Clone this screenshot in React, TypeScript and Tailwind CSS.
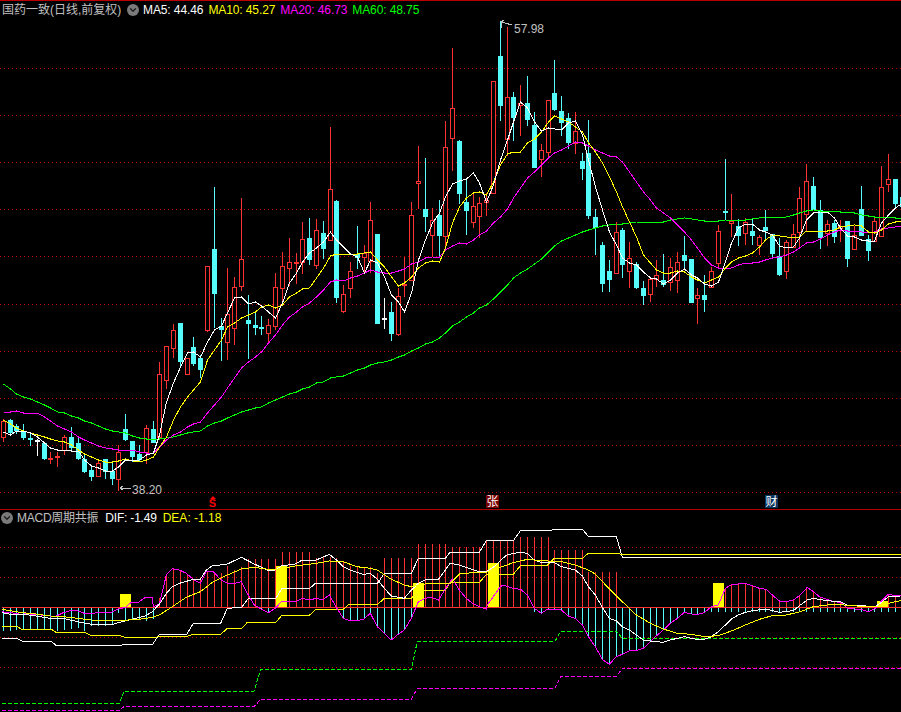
import { ChevronDown } from "lucide-react";

type Bar = [number, number, number, number, "r" | "c" | "w"];

// hi, body top, body bottom, lo, colour (pixels)
const BARS: Bar[] = [
  [419, 421, 437, 441, "r"], [419, 420, 432, 433, "c"], [424, 426, 430, 433, "c"], [424, 431, 437, 439, "c"],
  [433, 438, 439, 445, "c"], [439, 440, 441, 455, "w"], [442, 443, 458, 459, "c"], [452, 458, 459, 463, "r"],
  [452, 456, 457, 466, "r"], [435, 437, 450, 454, "r"], [427, 437, 447, 451, "c"], [438, 443, 458, 459, "c"],
  [455, 459, 471, 472, "c"], [465, 470, 476, 480, "c"], [460, 463, 476, 476, "r"], [459, 459, 471, 478, "c"],
  [463, 471, 478, 484, "c"], [445, 452, 479, 490, "r"], [414, 429, 439, 440, "c"], [441, 441, 456, 461, "c"],
  [445, 454, 459, 460, "c"], [425, 428, 452, 463, "r"], [421, 429, 442, 442, "c"], [362, 374, 437, 437, "r"],
  [346, 346, 380, 388, "r"], [324, 330, 348, 357, "r"], [323, 323, 361, 365, "c"], [358, 358, 374, 374, "r"],
  [337, 347, 363, 365, "c"], [355, 358, 369, 377, "c"], [266, 266, 330, 331, "r"], [187, 249, 293, 327, "c"],
  [318, 326, 329, 360, "c"], [268, 314, 342, 359, "r"], [277, 287, 328, 344, "r"], [198, 259, 286, 290, "r"],
  [295, 320, 323, 358, "c"], [313, 325, 327, 334, "c"], [316, 327, 328, 334, "c"], [319, 325, 333, 341, "r"],
  [273, 287, 326, 329, "r"], [252, 266, 288, 300, "r"], [238, 262, 268, 285, "r"], [253, 262, 263, 283, "r"],
  [222, 239, 262, 273, "r"], [218, 238, 259, 264, "c"], [219, 230, 265, 268, "r"], [221, 233, 248, 258, "c"],
  [127, 189, 240, 240, "r"], [200, 201, 297, 302, "c"], [285, 294, 311, 312, "r"], [262, 271, 288, 297, "r"],
  [226, 254, 257, 268, "c"], [245, 253, 257, 273, "r"], [202, 220, 261, 272, "r"], [234, 234, 323, 323, "c"],
  [298, 318, 319, 328, "w"], [302, 312, 333, 340, "c"], [288, 296, 334, 335, "r"], [257, 284, 285, 296, "r"],
  [202, 215, 280, 280, "r"], [146, 181, 183, 208, "r"], [158, 209, 216, 231, "c"], [208, 220, 235, 256, "r"],
  [200, 215, 235, 256, "c"], [121, 147, 236, 245, "r"], [48, 108, 138, 170, "r"], [140, 141, 193, 203, "c"],
  [180, 202, 210, 234, "c"], [193, 206, 222, 227, "r"], [197, 203, 216, 237, "r"], [193, 200, 202, 215, "r"],
  [81, 81, 193, 193, "r"], [21, 56, 105, 120, "c"], [27, 97, 139, 155, "r"], [92, 97, 117, 140, "c"],
  [85, 103, 105, 135, "r"], [76, 103, 119, 125, "c"], [112, 125, 167, 167, "c"], [144, 150, 159, 176, "r"],
  [100, 100, 152, 158, "r"], [60, 93, 109, 110, "c"], [96, 111, 122, 135, "c"], [113, 118, 142, 148, "c"],
  [112, 131, 143, 153, "r"], [153, 161, 168, 179, "c"], [120, 153, 215, 218, "c"], [209, 217, 227, 254, "c"],
  [242, 245, 283, 291, "c"], [260, 271, 279, 291, "c"], [222, 232, 273, 273, "r"], [228, 230, 264, 277, "c"],
  [242, 258, 271, 287, "r"], [262, 264, 287, 288, "c"], [281, 288, 295, 304, "c"], [278, 279, 294, 301, "r"],
  [260, 275, 279, 286, "r"], [254, 280, 284, 286, "c"], [258, 267, 282, 290, "r"], [252, 262, 280, 292, "r"],
  [236, 255, 260, 268, "c"], [259, 259, 302, 302, "c"], [288, 295, 298, 323, "r"], [275, 295, 299, 311, "c"],
  [267, 271, 287, 287, "r"], [225, 231, 263, 266, "r"], [159, 211, 212, 219, "c"], [194, 221, 223, 236, "r"],
  [219, 226, 235, 245, "c"], [218, 222, 233, 244, "r"], [219, 231, 235, 244, "c"], [235, 237, 245, 254, "r"],
  [210, 227, 230, 238, "c"], [234, 234, 253, 257, "c"], [238, 256, 274, 275, "c"], [240, 242, 271, 278, "r"],
  [224, 234, 247, 247, "r"], [187, 198, 232, 247, "r"], [164, 181, 214, 230, "r"], [177, 186, 209, 209, "c"],
  [200, 210, 237, 248, "c"], [220, 224, 233, 245, "r"], [220, 223, 236, 242, "c"], [220, 226, 228, 241, "r"],
  [221, 221, 258, 266, "c"], [226, 235, 249, 249, "r"], [186, 209, 235, 235, "c"], [235, 239, 250, 260, "c"],
  [217, 221, 241, 241, "r"], [166, 187, 236, 236, "r"], [154, 179, 184, 191, "r"], [179, 179, 203, 208, "c"],
  [197, 197, 206, 208, "c"],
];

const MA5 = [432,435,431,431,433,437,443,448,450,450,451,451,460,466,468,471,471,467,460,461,460,455,453,435,402,383,367,353,352,357,342,330,326,313,298,297,304,302,306,312,318,303,283,273,262,253,248,242,232,240,247,254,257,273,260,263,277,295,302,312,293,260,240,223,213,197,184,181,179,173,183,202,185,160,140,122,102,108,122,131,128,129,130,123,121,135,160,187,210,232,245,258,263,265,272,278,279,284,280,273,269,275,278,284,286,282,262,243,228,224,224,230,232,235,246,248,247,238,220,213,212,212,218,228,236,237,240,241,241,223,215,208,203];
const MA10 = [420,424,428,431,433,435,437,439,441,442,445,450,454,457,460,462,462,461,459,461,462,460,457,447,437,420,407,397,390,382,360,350,340,327,323,318,315,312,307,305,308,305,297,293,289,288,278,268,256,254,254,254,254,253,252,260,267,277,286,283,277,268,263,261,262,248,223,207,198,193,192,195,182,165,154,152,152,143,139,132,122,116,119,122,127,132,143,152,163,177,192,207,222,237,255,263,270,273,273,271,272,277,280,283,280,277,268,262,258,256,253,247,240,235,236,237,238,237,231,231,231,231,230,227,226,225,226,232,233,230,224,222,221];
const MA20 = [412,412,411,413,413,413,417,421,426,429,432,437,440,443,446,448,449,450,450,450,452,453,453,447,440,435,432,427,424,422,413,405,397,388,378,368,362,357,352,343,335,325,317,312,307,303,297,290,282,280,281,278,276,273,270,272,273,273,271,269,264,262,258,257,257,250,246,243,244,240,235,231,223,217,209,198,188,178,172,165,158,153,150,146,142,143,146,150,153,156,157,162,172,182,192,200,208,213,218,225,232,240,248,258,265,268,269,268,265,263,263,262,260,258,257,255,252,248,243,242,239,235,232,230,231,231,232,233,232,229,228,227,226];
const MA60 = [384,389,394,397,399,402,405,408,412,413,416,418,421,423,426,429,431,432,433,436,438,439,439,439,438,437,435,433,432,431,426,423,421,418,415,412,410,408,407,403,400,397,394,392,389,387,383,382,378,377,376,373,370,368,365,363,362,360,357,355,351,348,344,342,338,333,326,322,317,313,308,305,299,292,285,278,273,269,264,259,252,246,241,238,235,232,230,228,226,225,224,224,223,222,222,222,222,222,220,219,218,219,220,221,221,221,220,220,220,220,219,218,217,217,218,217,215,213,211,210,211,211,211,212,212,213,215,216,217,217,217,218,218];

// lower panel readings: x and y in 3x units, y measured from 490; right half is shifted by 1350
const low = (left: number[][], right: number[][] = []) =>
  [...left, ...right.map(([x, y]) => [x + 1350, y])].map(([x, y]) => `${x / 3},${490 + y / 3}`).join(" ");

const DIF = low(
  [[5,368],[28,372],[67,372],[108,378],[151,385],[190,385],[232,395],[274,403],[334,405],[355,398],[394,388],[436,378],[457,365],[480,340],[499,310],[517,290],[538,280],[580,268],[601,268],[619,240],[640,225],[661,225],[682,222],[703,212],[724,202],[763,222],[784,232],[805,242],[826,240],[844,228],[886,222],[907,210],[949,210],[988,193],[1009,210],[1030,230],[1051,240],[1090,253],[1111,250],[1132,268],[1153,295],[1174,318],[1213,325],[1234,300],[1255,280],[1276,270],[1315,268],[1336,240]],
  [[0,220],[28,225],[49,232],[88,245],[109,245],[130,232],[151,212],[170,195],[190,190],[212,187],[232,190],[253,210],[274,217],[313,218],[334,230],[376,240],[397,258],[415,290],[436,315],[457,352],[478,385],[499,392],[517,410],[538,420],[559,435],[580,450],[601,453],[640,457],[661,450],[682,445],[703,440],[724,445],[742,448],[763,448],[784,440],[805,425],[826,405],[847,385],[865,375],[886,367],[907,362],[949,357],[988,367],[1030,362],[1051,345],[1072,330],[1090,325],[1132,332],[1174,336],[1192,345],[1234,347],[1276,350],[1297,335],[1315,320],[1352,318]]
);
const DEA = low(
  [[5,358],[67,368],[108,372],[151,378],[190,380],[232,385],[274,390],[355,392],[415,388],[457,382],[478,375],[517,350],[559,322],[601,305],[640,275],[682,255],[724,237],[763,232],[805,238],[826,240],[886,228],[949,220],[988,213],[1030,215],[1070,230],[1111,235],[1132,240],[1174,268],[1213,285],[1234,290],[1276,282],[1315,280]],
  [[0,280],[28,252],[67,248],[109,247],[151,232],[190,218],[232,208],[274,212],[334,215],[376,225],[415,240],[436,252],[478,297],[517,335],[559,375],[601,400],[640,417],[682,430],[724,433],[763,440],[805,437],[847,422],[886,405],[928,388],[967,377],[1009,375],[1051,365],[1090,350],[1132,345],[1174,343],[1192,347],[1276,350],[1315,340],[1352,332]]
);
const MACD = low(
  [[5,365],[28,368],[49,370],[67,368],[88,372],[108,373],[130,376],[151,378],[169,378],[190,368],[211,362],[232,362],[253,370],[274,372],[292,367],[313,367],[334,367],[355,357],[376,352],[394,337],[415,337],[436,322],[457,322],[460,350],[478,343],[499,255],[517,236],[538,240],[559,250],[580,268],[601,280],[619,245],[640,245],[661,268],[682,280],[703,280],[724,275],[742,310],[763,345],[784,357],[805,368],[826,355],[844,335],[865,335],[886,335],[907,325],[928,330],[949,325],[967,330],[988,315],[1009,352],[1030,385],[1051,393],[1070,392],[1090,388],[1111,370],[1132,410],[1153,430],[1174,450],[1192,435],[1213,420],[1234,385],[1255,335],[1276,325],[1294,322],[1315,330]],
  [[7,265],[28,300],[49,325],[67,340],[88,350],[109,357],[112,345],[151,290],[160,285],[190,295],[212,298],[232,315],[253,355],[274,370],[292,358],[313,357],[334,360],[355,378],[376,385],[397,405],[415,440],[436,470],[457,508],[478,523],[499,500],[517,493],[538,482],[559,482],[580,475],[601,455],[622,435],[640,420],[661,400],[682,385],[703,367],[724,372],[742,373],[763,368],[784,350],[805,345],[826,295],[847,282],[865,282],[886,280],[907,287],[928,295],[949,298],[967,315],[988,333],[1009,335],[1030,330],[1051,315],[1072,292],[1090,305],[1111,322],[1132,328],[1153,335],[1174,338],[1192,355],[1213,357],[1234,358],[1255,365],[1276,355],[1297,330],[1315,313],[1336,317],[1352,318]]
);
const STEP_WHITE = low(
  [[5,445],[50,445],[65,453],[155,455],[168,466],[365,466],[370,463],[458,463],[478,433],[560,433],[580,400],[662,400],[682,355],[725,352],[745,325],[828,325],[845,296],[928,296],[945,281],[1132,281],[1153,250],[1234,250],[1255,205],[1336,205]],
  [[0,187],[88,187],[109,152],[190,152],[212,121],[303,121],[310,118],[397,118],[415,139],[499,139],[517,202],[1352,202]]
);
const STEP_YELLOW = low(
  [[5,409],[50,409],[65,418],[155,418],[168,427],[255,427],[272,436],[358,436],[372,441],[470,441],[478,439],[560,439],[580,433],[662,433],[682,415],[725,415],[742,397],[828,397],[845,376],[928,376],[948,358],[1030,358],[1045,344],[1132,344],[1153,325],[1234,325],[1255,301],[1336,301]],
  [[0,278],[88,278],[109,253],[190,253],[212,226],[292,226],[313,205],[397,205],[415,190],[499,190],[517,193],[1352,193]]
);
const DASH_GREEN = low(
  [[5,640],[358,640],[372,604],[762,604],[782,538],[1234,538],[1252,454]],
  [[0,454],[315,454],[332,424],[499,424],[517,445],[1352,445]]
);
const DASH_MAGENTA = low(
  [[5,661],[358,661],[372,650],[762,650],[782,628],[1234,628],[1252,595]],
  [[0,595],[315,595],[332,559],[499,559],[517,535],[1352,535]]
);

// histogram ends by bar index, same 3x units; 0 means no stick
const RED_TOPS = [0,0,0,0,0,0,0,0,0,0,0,0,0,0,0,0,0,0,0,0,0,0,0,325,258,238,240,255,268,268,245,245,250,228,240,232,208,208,208,208,208,186,186,186,186,186,205,202,202,205,215,228,232,232,232,250,205,205,205,205,205,162,162,162,162,162,172,172,172,172,172,150,150,150,150,150,140,140,140,140,140,180,180,180,180,180,245,245,245,245,245,0,0,0,0,0,0,0,0,0,0,0,0,0,0,0,295,282,282,280,287,295,298,315,333,335,330,315,292,305,322,328,335,338,0,0,0,0,0,330,313,317,318];
const CYAN_ENDS = [423,423,420,420,420,420,420,420,423,420,418,415,423,408,408,408,405,370,390,388,390,392,388,0,0,0,0,0,0,0,0,0,0,0,0,0,0,0,357,368,355,0,0,0,0,0,0,0,0,0,385,393,392,388,370,410,430,450,435,420,385,0,0,0,0,0,0,0,0,0,0,0,0,0,0,0,0,0,365,370,358,357,360,378,385,405,440,470,508,523,500,493,482,482,475,455,435,420,400,385,367,372,373,368,365,365,365,365,365,365,365,365,365,365,365,365,365,365,365,365,365,365,365,365,365,365,365,365,365,365,365,365,365];

const YELLOW_BLOCKS = [
  [120, 594], [276, 566], [413, 583], [488, 563], [713, 583], [877, 601],
];

const GRID_TOP = [68, 115, 162, 209, 256, 304, 351, 398, 445, 492];
const GRID_LOW = [547, 577, 637, 667];

const barX = (i: number) => Math.round(2.7 + 6.81 * i);
const line = (ys: number[]) => ys.map((y, i) => `${barX(i) + 0.5},${y}`).join(" ");

function Candle({ bar, x }: { bar: Bar; x: number }) {
  const [hi, top, bot, lo, kind] = bar;
  if (kind === "r") {
    return (
      <g>
        <rect x={x} y={hi} width={1} height={lo - hi + 1} fill="#ff3232" />
        <rect x={x - 2 + 0.5} y={top + 0.5} width={4} height={Math.max(bot - top, 1)} fill="#000" stroke="#ff3232" />
      </g>
    );
  }
  const color = kind === "c" ? "#54fcfc" : "#ffffff";
  return (
    <g>
      <rect x={x} y={hi} width={1} height={lo - hi + 1} fill={color} />
      <rect x={x - 2} y={top} width={5} height={Math.max(bot - top + 1, 2)} fill={color} />
    </g>
  );
}

function MenuDot() {
  return (
    <span className="flex h-3 w-3 shrink-0 items-center justify-center rounded-full bg-[#7a7a7a]">
      <ChevronDown size={10} strokeWidth={3} color="#1c1c1c" />
    </span>
  );
}

export default function App() {
  return (
    <div className="flex h-[712px] w-[901px] flex-col overflow-hidden bg-black font-['Liberation_Sans','Noto_Sans_CJK_SC',sans-serif] text-xs leading-none text-[#c0c0c0]">
      <div className="h-px shrink-0 bg-[#b80000]" />

      {/* price panel */}
      <div className="relative h-[508px] shrink-0">
        <svg className="block" width={901} height={508} viewBox="0 1 901 508">
          {GRID_TOP.map((y) => (
            <line key={y} x1={0} x2={901} y1={y + 0.5} y2={y + 0.5} stroke="#c00000" strokeDasharray="1 3" />
          ))}
          <g shapeRendering="crispEdges">
            {BARS.map((b, i) => (
              <Candle key={i} bar={b} x={barX(i)} />
            ))}
          </g>
          <g fill="none" strokeWidth={1} shapeRendering="crispEdges">
            <polyline points={line(MA60)} stroke="#00ff00" />
            <polyline points={line(MA20)} stroke="#ff00ff" />
            <polyline points={line(MA10)} stroke="#ffff00" />
            <polyline points={line(MA5)} stroke="#ffffff" />
          </g>
          <g fill="none" stroke="#c0c0c0" shapeRendering="crispEdges">
            <polyline points="512,25 505,23 501,22 504,20" />
            <polyline points="501,22 501,28" />
            <polyline points="131,488 120,488" />
            <polyline points="123,486 120,488 123,490" />
          </g>
        </svg>

        <div className="absolute left-[2px] top-[3px] flex items-center">
          <span className="w-[122px] whitespace-nowrap">国药一致(日线,前复权)</span>
          <span className="ml-[3px]"><MenuDot /></span>
          <span className="ml-[4px] flex gap-[5px] whitespace-nowrap tracking-[-0.1px]">
            <span className="text-white">MA5: 44.46</span>
            <span className="text-[#ffff00]">MA10: 45.27</span>
            <span className="text-[#ff00ff]">MA20: 46.73</span>
            <span className="text-[#00ff00]">MA60: 48.75</span>
          </span>
        </div>

        <span className="absolute left-[514px] top-[22px]">57.98</span>
        <span className="absolute left-[132px] top-[483px]">38.20</span>

        <div className="absolute left-[209px] top-[495px] flex w-[7px] flex-col items-center text-[#ff0000]">
          <span className="h-0 w-0 border-x-[3px] border-b-[3px] border-x-transparent border-b-[#ff0000]" />
          <span className="text-[11px] font-bold leading-[9px]">S</span>
        </div>
        <span className="absolute left-[486px] top-[494px] flex h-[13px] w-[13px] items-center justify-center bg-[#7a0000] text-white">张</span>
        <span className="absolute left-[765px] top-[494px] flex h-[13px] w-[13px] items-center justify-center bg-[#0a3560] text-white">财</span>
      </div>

      <div className="h-px shrink-0 bg-[#b00000]" />

      {/* indicator panel */}
      <div className="relative flex-1">
        <svg className="block" width={901} height={202} viewBox="0 510 901 202">
          {GRID_LOW.map((y) => (
            <line key={y} x1={0} x2={901} y1={y + 0.5} y2={y + 0.5} stroke="#c00000" strokeDasharray="1 3" />
          ))}
          <g shapeRendering="crispEdges">
            {RED_TOPS.map((z, i) =>
              z ? <rect key={i} x={barX(i)} y={490 + z / 3} width={1} height={607 - (490 + z / 3)} fill="#ff3232" /> : null
            )}
            {CYAN_ENDS.map((z, i) =>
              z ? <rect key={i} x={barX(i)} y={608} width={1} height={490 + z / 3 - 608} fill="#54fcfc" /> : null
            )}
            <rect x={2} y={607} width={899} height={1} fill="#ff3232" />
            {YELLOW_BLOCKS.map(([x, y]) => (
              <rect key={x} x={x} y={y} width={11} height={607 - y} fill="#ffff00" />
            ))}
          </g>
          <g fill="none" shapeRendering="crispEdges">
            <polyline points={DASH_GREEN} stroke="#00ff00" strokeDasharray="4 2" />
            <polyline points={DASH_MAGENTA} stroke="#ff00ff" strokeDasharray="4 2" />
            <polyline points={STEP_WHITE} stroke="#ffffff" />
            <polyline points={STEP_YELLOW} stroke="#ffff00" />
            <polyline points={MACD} stroke="#ff00ff" />
            <polyline points={DIF} stroke="#ffffff" />
            <polyline points={DEA} stroke="#ffff00" />
          </g>
        </svg>

        <div className="absolute left-[1px] top-[2px] flex items-center whitespace-nowrap">
          <MenuDot />
          <span className="ml-[4px] tracking-[-0.25px]">MACD周期共振</span>
          <span className="ml-[7px] tracking-[-0.2px] text-white">DIF: -1.49</span>
          <span className="ml-[6px] text-[#ffff00]">DEA: -1.18</span>
        </div>
      </div>
    </div>
  );
}
